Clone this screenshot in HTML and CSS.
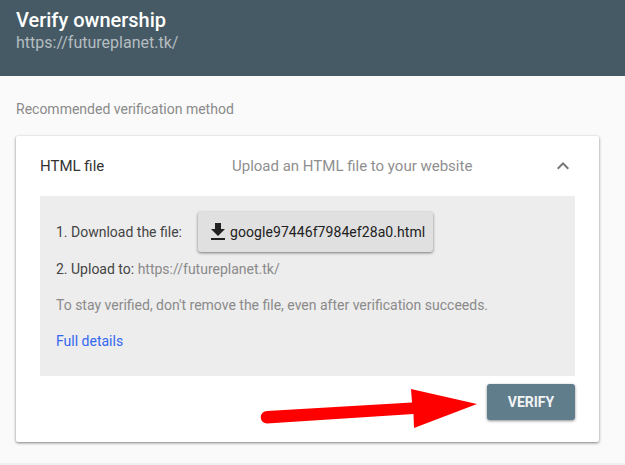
FILE: index.html
```html
<!DOCTYPE html>
<html lang="en">
<head>
    <meta charset="UTF-8">
    <title>Verify ownership</title>
    <link rel="stylesheet" href="styles.css">
</head>
<body>
    <div class="page">
        <div class="header">
            <h1>Verify ownership</h1>
            <div class="site">https://futureplanet.tk/</div>
        </div>

        <div class="content">
            <div class="section-label">Recommended verification method</div>

            <div class="card">
                <div class="card-head">
                    <span class="method">HTML file</span>
                    <span class="method-desc">Upload an HTML file to your website</span>
                    <svg class="chevron" width="24" height="24" viewBox="0 0 24 24">
                        <path d="M7.4 15.4 12 10.8l4.6 4.6L18 14l-6-6-6 6z" fill="#757575"/>
                    </svg>
                </div>

                <div class="panel">
                    <div class="step-download">
                        <span class="step-label">1. Download the file:</span>
                        <button class="download-btn">
                            <svg width="24" height="24" viewBox="0 0 24 24">
                                <path d="M19 9h-4V3H9v6H5l7 7 7-7zM5 18v2h14v-2H5z" fill="#212121"/>
                            </svg>
                            <span class="step-label">google97446f7984ef28a0.html</span>
                        </button>
                    </div>
                    <p class="step">2. Upload to: <span class="muted">https://futureplanet.tk/</span></p>
                    <p class="note">To stay verified, don't remove the file, even after verification succeeds.</p>
                    <a class="details" href="#">Full details</a>
                </div>

                <div class="card-actions">
                    <button class="verify-btn">VERIFY</button>
                </div>
            </div>
        </div>

        <!-- red annotation drawn on top of the screenshot -->
        <svg class="arrow" width="625" height="465" viewBox="0 0 625 465">
            <path d="M267 411 L412 402.5 L411 389 L477 404 L414 428 L413.500 414 L267 423.500 A6.250 6.250 0 0 1 267 411 Z" fill="#ff0000"/>
        </svg>
    </div>
</body>
</html>
```

FILE: styles.css
```css
* {
    margin: 0;
    padding: 0;
    box-sizing: border-box;
}

body {
    font-family: Roboto, Arial, sans-serif;
    background-color: #fafafa;
    color: #3c4043;
    overflow: hidden;
}

.page {
    position: relative;
    width: 625px;
    height: 465px;
    overflow: hidden;
    border-bottom: 2px solid #f0f0f0;
}

.header {
    height: 76px;
    background-color: #455a64;
    padding: 8px 16px 0;
}

.header h1 {
    font-size: 20px;
    line-height: 24px;
    font-weight: 500;
    color: #fff;
}

.site {
    font-size: 16px;
    line-height: 22px;
    color: #b5bdc1;
}

.content {
    padding: 24px 26px 0 16px;
}

.section-label {
    font-size: 14px;
    line-height: 18px;
    color: #8a8a8a;
    margin-bottom: 18px;
}

.card {
    background-color: #fff;
    border-radius: 2px;
    height: 306px;
    box-shadow: 0 1px 3px rgba(0,0,0,0.5);
    padding: 0 24px;
}

.card-head {
    display: flex;
    align-items: center;
    height: 60px;
    font-size: 15px;
}

.method {
    width: 192px;
    color: #333;
}

.method-desc {
    flex: 1;
    color: #8f8f8f;
}

.panel {
    height: 180px;
    background-color: #ededed;
    padding: 16px;
    font-size: 14px;
    color: #444;
}

.step-download {
    display: flex;
    align-items: center;
    gap: 16px;
    height: 40px;
    margin-bottom: 7px;
}

.step-label {
    margin-bottom: 1px;
}

.download-btn {
    display: flex;
    align-items: center;
    height: 40px;
    padding: 0 8px;
    border: none;
    border-radius: 3px;
    background-color: #e0e0e0;
    box-shadow: 0 1px 3px rgba(0,0,0,0.5);
    font-family: inherit;
    font-size: 14px;
    font-weight: 400;
    letter-spacing: 0.07px;
    color: #212121;
}

.step {
    line-height: 20px;
    margin-bottom: 16px;
}

.note {
    line-height: 20px;
    color: #8a8a8a;
    margin-bottom: 16px;
}

.muted {
    color: #8a8a8a;
}

.details {
    display: block;
    line-height: 20px;
    color: #3367f0;
    text-decoration: none;
}

.card-actions {
    display: flex;
    justify-content: flex-end;
    padding-top: 8px;
}

.verify-btn {
    width: 88px;
    height: 36px;
    border: none;
    border-radius: 3px;
    background-color: #607d8b;
    box-shadow: 0 1px 3px rgba(0,0,0,0.45);
    font-family: inherit;
    font-size: 14px;
    font-weight: 700;
    color: #f1f4f5;
}

.arrow {
    position: absolute;
    top: 0;
    left: 0;
}
```
